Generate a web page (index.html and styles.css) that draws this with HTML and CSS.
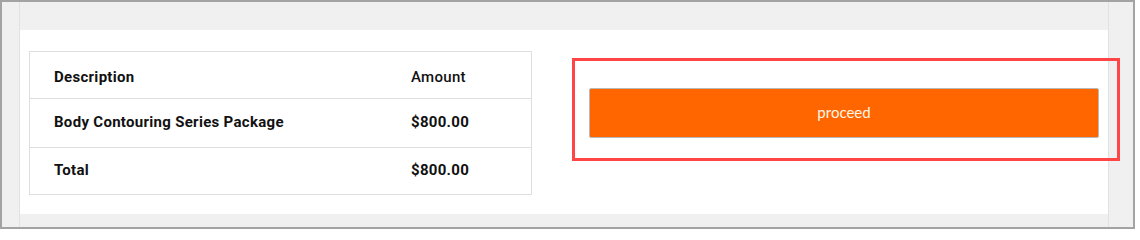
FILE: index.html
```html
<!DOCTYPE html>
<html>
<head>
<meta charset="utf-8">
<link rel="stylesheet" href="styles.css">
</head>
<body>
<div class="frame">
  <div class="wrap">
    <div class="card">
      <div class="table">
        <div class="row head">
          <div class="cell desc">Description</div>
          <div class="cell amt amt-head">Amount</div>
        </div>
        <div class="row item">
          <div class="cell desc">Body Contouring Series Package</div>
          <div class="cell amt">$800.00</div>
        </div>
        <div class="row total">
          <div class="cell desc">Total</div>
          <div class="cell amt">$800.00</div>
        </div>
      </div>
      <div class="highlight">
        <button class="proceed">proceed</button>
      </div>
    </div>
  </div>
</div>
</body>
</html>
```
FILE: styles.css
```css
html, body {
  margin: 0;
  padding: 0;
  background: #ffffff;
}
.frame {
  box-sizing: border-box;
  width: 1135px;
  height: 229px;
  border: 2px solid #a3a3a3;
  background: #f0f0f0;
  padding-left: 17px;
}
.wrap {
  box-sizing: border-box;
  width: 1090px;
  height: 100%;
  border-left: 1px solid #e2e2e2;
  border-right: 1px solid #e2e2e2;
  padding-top: 28px;
}
.card {
  box-sizing: border-box;
  height: 184px;
  background: #ffffff;
  display: flex;
  align-items: flex-start;
  padding: 21px 0 0 9px;
}
.table {
  box-sizing: border-box;
  flex: none;
  width: 503px;
  border: 1px solid #dedede;
  font-family: Roboto, "Liberation Sans", sans-serif;
  font-size: 15px;
  letter-spacing: 0.3px;
  color: #111111;
}
.row {
  box-sizing: border-box;
  display: grid;
  grid-template-columns: 357px 1fr;
  align-items: center;
}
.row + .row {
  border-top: 1px solid #dedede;
}
.head { height: 46px; padding-top: 4px; }
.item { height: 49px; padding-bottom: 2px; }
.total { height: 47px; padding-bottom: 2px; }
.cell {
  font-weight: 700;
}
.desc {
  padding-left: 24px;
}
.amt {
  padding-left: 24px;
}
.amt-head {
  font-weight: 500;
}
.highlight {
  box-sizing: border-box;
  flex: none;
  width: 548px;
  height: 103px;
  margin-left: 40px;
  margin-top: 7px;
  border: 3px solid #ff4545;
  padding: 27px 0 0 14px;
}
.proceed {
  box-sizing: border-box;
  display: flex;
  align-items: center;
  justify-content: center;
  width: 510px;
  height: 50px;
  margin: 0;
  padding: 0 0 2px 0;
  background: #ff6600;
  border: 1px solid #b8b8b8;
  border-radius: 2px;
  color: #fff6ea;
  font-family: Lato, "Open Sans", sans-serif;
  font-size: 15px;
  cursor: pointer;
}
```
